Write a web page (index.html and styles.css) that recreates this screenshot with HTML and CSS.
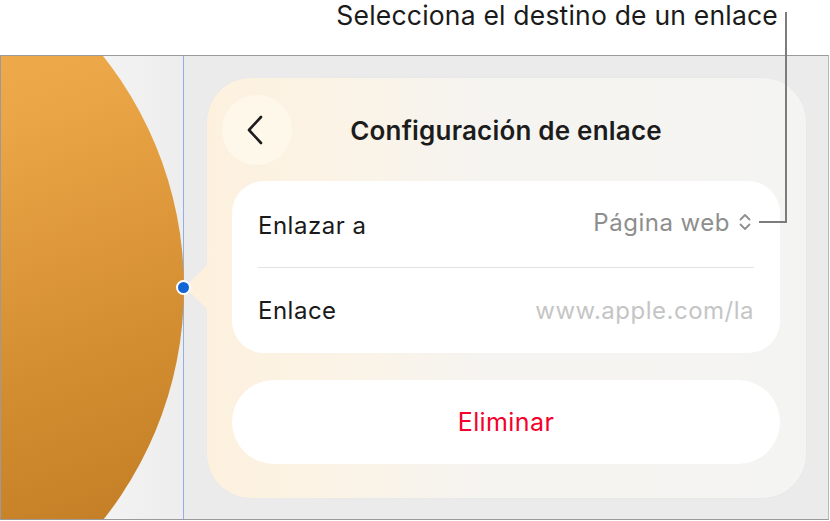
FILE: index.html
```html
<!DOCTYPE html>
<html lang="es">
<head>
  <meta charset="UTF-8">
  <meta name="viewport" content="width=device-width, initial-scale=1.0">
  <title>Configuración de enlace</title>
  <link rel="stylesheet" href="styles.css">
</head>
<body>
  <div class="callout">
    <span class="callout-text">Selecciona el destino de un enlace</span>
    <div class="callout-line"></div>
  </div>

  <div class="frame">
    <div class="canvas">
      <div class="shape"></div>
      <div class="handle"></div>
    </div>
    <div class="side">
      <div class="popover">
        <div class="arrow"></div>
        <div class="pop-header">
          <div class="back-btn">
            <svg width="22" height="32" viewBox="0 0 22 32"><path d="M17 3 L5 16 L17 29" fill="none" stroke="#1c1c1c" stroke-width="2.6" stroke-linecap="round" stroke-linejoin="round"/></svg>
          </div>
          <h2 class="pop-title">Configuración de enlace</h2>
        </div>

        <div class="card">
          <div class="row">
            <span class="row-label">Enlazar a</span>
            <span class="row-value">Página web
              <svg class="updown" width="14" height="20" viewBox="0 0 14 20"><path d="M2.5 7.5 L7 3 L11.5 7.5 M2.5 12.5 L7 17 L11.5 12.5" fill="none" stroke="#8e8e8e" stroke-width="1.8" stroke-linecap="round" stroke-linejoin="round"/></svg>
            </span>
          </div>
          <div class="divider"></div>
          <div class="row">
            <span class="row-label">Enlace</span>
            <span class="row-placeholder">www.apple.com/la</span>
          </div>
        </div>

        <div class="delete-btn">Eliminar</div>
      </div>
    </div>
  </div>
</body>
</html>
```

FILE: styles.css
```css
body {
  margin: 0;
  font-family: Inter, "Noto Sans", sans-serif;
  background: #fff;
  color: #1c1c1c;
  width: 830px;
  height: 521px;
  overflow: hidden;
}
.callout {
  height: 55px;
  position: relative;
}
.callout-text {
  position: absolute;
  right: 52px;
  top: -1px;
  font-size: 26.5px;
  line-height: 32px;
  letter-spacing: 0.2px;
  color: #1a1a1a;
}
.callout-line {
  position: absolute;
  left: 759px;
  top: 12px;
  width: 26px;
  height: 209px;
  border-right: 2px solid #7c7c7c;
  border-bottom: 2px solid #7c7c7c;
  z-index: 5;
}
.frame {
  width: 827px;
  height: 463px;
  border: 1px solid #9a9a9a;
  border-right-color: #b8b8b8;
  display: flex;
  overflow: hidden;
}
.canvas {
  width: 182px;
  position: relative;
  background: linear-gradient(90deg, #fbfbfb, #ededed);
  border-right: 1px solid #8fb0ea;
}
.shape {
  position: absolute;
  left: -563px;
  top: -141px;
  width: 746px;
  height: 746px;
  border-radius: 50%;
  background: linear-gradient(160deg, #f8b658 0%, #eba647 40%, #cc862b 75%, #b8731f 100%);
}
.handle {
  position: absolute;
  left: 175px;
  top: 224px;
  width: 11px;
  height: 11px;
  border-radius: 50%;
  background: #1366d6;
  border: 2px solid #fff;
  z-index: 3;
}
.side {
  flex: 1;
  background: #ebebeb;
  padding: 22px 22px 21px 23px;
}
.popover {
  position: relative;
  height: 100%;
  box-sizing: border-box;
  border-radius: 44px;
  background: linear-gradient(90deg, #fdf1de 0%, #fbf3e6 22%, #f6f4f0 45%, #f4f4f2 100%);
  box-shadow: 0 0 2px rgba(0,0,0,0.04);
  padding: 17px 26px 0 25px;
  display: flex;
  flex-direction: column;
}
.arrow {
  position: absolute;
  left: -22px;
  top: 186px;
  width: 0;
  height: 0;
  border-top: 23px solid transparent;
  border-bottom: 23px solid transparent;
  border-right: 23px solid #fdf1de;
}
.pop-header {
  display: flex;
  align-items: center;
  height: 70px;
  position: relative;
}
.back-btn {
  width: 70px;
  height: 70px;
  margin-left: -10px;
  border-radius: 50%;
  background: #fdf8ea;
  display: flex;
  align-items: center;
  justify-content: center;
}
.back-btn svg {
  margin-right: 4px;
}
.pop-title {
  position: absolute;
  left: 0;
  right: 0;
  text-align: center;
  margin: 0;
  font-size: 26px;
  font-weight: 600;
  letter-spacing: 0.2px;
  pointer-events: none;
}
.card {
  margin-top: 16px;
  background: #fff;
  border-radius: 32px;
  padding: 0 26px;
}
.row {
  height: 85px;
  display: flex;
  align-items: center;
  justify-content: space-between;
  font-size: 24px;
  letter-spacing: 0.5px;
}
.row:first-child {
  height: 86px;
  padding-top: 2px;
  box-sizing: border-box;
}
.row-label {
  color: #1a1a1a;
}
.row-value {
  color: #8e8e8e;
  display: flex;
  align-items: center;
  gap: 8px;
  margin-right: 2px;
  margin-top: -6px;
}
.row-placeholder {
  color: #c5c5c5;
}
.divider {
  height: 1px;
  background: #e2e2e2;
}
.delete-btn {
  margin-top: 27px;
  height: 84px;
  border-radius: 42px;
  background: #fff;
  display: flex;
  align-items: center;
  justify-content: center;
  color: #f5002c;
  font-size: 25px;
  letter-spacing: 0.4px;
}
```
